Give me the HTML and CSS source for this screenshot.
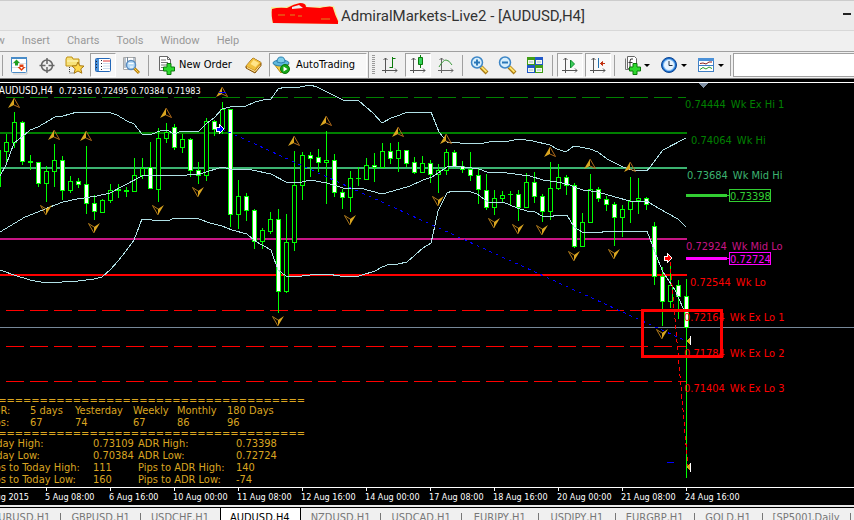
FILE: index.html
```html
<!DOCTYPE html>
<html lang="en">
<head>
<meta charset="utf-8">
<title>AdmiralMarkets-Live2 - [AUDUSD,H4]</title>
<link rel="stylesheet" href="styles.css">
</head>
<body>
<header class="titlebar">
  <svg class="scribble" width="72" height="26" viewBox="264 1 72 26" aria-hidden="true">
    <path d="M266 7h14l14-4 7 1 1 3 27-1 5 16-3 2-64-1z" fill="#f5ef9a"/>
    <path d="M267 9q6-2 15-1 7-4 13-5 6 0 6 4l14 1q13-3 13 0 2 7 5 13v3l-65-1q-2-8-1-14z" fill="#f00"/>
    <path d="M287 7l7-2 4 3-11 1z" fill="#ebebeb"/>
    <path d="M273 15h7m5 0h5m3 1h4m19 3h9" stroke="#d98a20"/>
  </svg>
  <h1 class="caption">AdmiralMarkets-Live2 - [AUDUSD,H4]</h1>
  <button class="minimize" aria-label="Minimize"></button>
</header>
<nav class="menu">
  <button>View</button><button>Insert</button><button>Charts</button><button>Tools</button><button>Window</button><button>Help</button>
</nav>
<div class="toolbar">
  <span class="sep sep-first"></span>
  <button class="tool" aria-label="Market Watch"><svg width="20" height="20" viewBox="0 0 20 20"><path d="M4 19h14V5" fill="none" stroke="#ccc"/><rect x="2.500" y="2.500" width="15" height="15" rx="1" fill="#fff" stroke="#4a8cc8"/><path d="M2 3h16" stroke="#4a8cc8" stroke-width="2"/><path d="M3 8.500h14M3 12.500h14" stroke="#ddd"/><path d="M7.500 4.500l3.500 3.500H9v2.500H6V8H4z" fill="#20a020"/><path d="M12.500 16L8.500 12h2V9.500h4V12h2z" fill="#e04010"/><path d="M12.500 14l-1.500-2h3z" fill="#fff"/></svg></button>
  <button class="tool" aria-label="Data Window"><svg width="20" height="20" viewBox="0 0 20 20"><circle cx="10" cy="10.500" r="5.500" fill="none" stroke="#666" stroke-width="1.500"/><path d="M10 3v6M10 12v6M2.500 10.500h6M11.500 10.500h6" stroke="#666" stroke-width="1.500"/></svg></button>
  <button class="tool" aria-label="Navigator"><svg width="22" height="20" viewBox="0 0 22 20"><path d="M2 4l1-2h5l1 2h6v7H2z" fill="#f7e27a" stroke="#c09010"/><path d="M3 6h11" stroke="#fff8c0"/><path d="M5.500 12v6h5" fill="none" stroke="#444" stroke-dasharray="1 1"/><path d="M14 7l1.700 3.700 4.300.4-3.200 2.800 1 4.300-3.800-2.200-3.800 2.200 1-4.300L8 11.100l4.300-.4z" fill="#ffd84a" stroke="#a87810"/></svg></button>
  <button class="tool pressed" aria-label="Terminal"><svg width="20" height="20" viewBox="0 0 20 20"><rect x="2.500" y="3.500" width="15" height="13" rx="1" fill="#fff" stroke="#2468b8"/><path d="M3 4h3v12H3z" fill="#4b91d8"/><path d="M8.500 5v10M3.500 6v8" stroke="#223" stroke-dasharray="1 2"/><path d="M10 6h7" stroke="#d33"/><path d="M10 8.500h7M10 11h7M10 13.500h7" stroke="#cde"/></svg></button>
  <button class="tool" aria-label="Strategy Tester"><svg width="20" height="20" viewBox="0 0 20 20"><path d="M2.500 2.500h12v12h-12z" fill="#fff" stroke="#aaa"/><path d="M4 3v10M6.500 2v8M13 2v8" stroke="#789"/><circle cx="10" cy="10" r="4.500" fill="#b8dcf8" stroke="#5a8cc0" stroke-width="1.500"/><path d="M7.500 8.500h5M9 12h3" stroke="#fff"/><path d="M13.500 13.500l4.500 4.500" stroke="#b88010" stroke-width="3"/><path d="M13.500 13.500l4 4" stroke="#ffd84a"/></svg></button>
  <span class="sep"></span>
  <button class="tool labelled new-order"><svg width="20" height="20" viewBox="0 0 20 20"><path d="M3.500 1.500h8l3 3v11h-11z" fill="#fff" stroke="#666"/><path d="M11.500 1.500v3h3" fill="none" stroke="#666"/><path d="M5 5h5M5 7.500h7M5 10h7M5 12.500h3" stroke="#777"/><path d="M11 8.500h4V12h3.500v4H15v3.500h-4V16H7.500v-4H11z" fill="#2dd82d" stroke="#087a08"/></svg>New Order</button>
  <button class="tool" aria-label="MetaEditor"><svg width="20" height="20" viewBox="0 0 20 20"><path d="M2 11l7-8 8 4.500v3L11 18l-9-5z" fill="#c88a18" stroke="#855308"/><path d="M9 3l8 4.500-6.500 7.500L2 11z" fill="#f0c040"/><path d="M9.500 5l5.500 3-3.500 4-5-3z" fill="#ffe58a"/><path d="M3 12.500l8 4 5-6" fill="none" stroke="#ffe9a8"/></svg></button>
  <button class="tool labelled auto pressed"><svg width="20" height="20" viewBox="0 0 20 20"><path d="M2 9l7 9 8-9z" fill="#f2cc45" stroke="#b58a10"/><ellipse cx="9" cy="8" rx="8" ry="3" fill="#60b8dc" stroke="#2a7fae"/><path d="M5 7q0-5 4-5t4 5q-4 2-8 0z" fill="#7ccdea" stroke="#2a7fae"/><circle cx="13" cy="14" r="4.500" fill="#16a716" stroke="#0a770a"/><path d="M11.500 11.500v5l4-2.500z" fill="#fff"/></svg>AutoTrading</button>
  <span class="sep sep-end"></span><span class="grip"></span>
  <button class="tool" aria-label="Bar Chart"><svg width="20" height="20" viewBox="0 0 20 20"><path d="M5.500 3v15M2 15.500h15M3.500 5l2-2 2 2M15 13.500l2 2-2 2" fill="none" stroke="#555"/><path d="M12.500 2v11M12.500 3.500h3M9.500 12.500h3" stroke="#0a7a0a"/></svg></button>
  <button class="tool pressed" aria-label="Candlesticks"><svg width="20" height="20" viewBox="0 0 20 20"><path d="M5.500 3v15M2 15.500h15M3.500 5l2-2 2 2M15 13.500l2 2-2 2" fill="none" stroke="#555"/><path d="M12.500 0v13" stroke="#0a7a0a"/><path d="M10.500 2.500h4v7h-4z" fill="#35d35a" stroke="#0a7a0a"/></svg></button>
  <button class="tool" aria-label="Line Chart"><svg width="20" height="20" viewBox="0 0 20 20"><path d="M5.500 3v15M2 15.500h15M3.500 5l2-2 2 2M15 13.500l2 2-2 2" fill="none" stroke="#666"/><path d="M3 12q4-7 7-7t6 5" fill="none" stroke="#3b9b3b"/></svg></button>
  <span class="sep sep-tight"></span>
  <button class="tool" aria-label="Zoom In"><svg width="20" height="20" viewBox="0 0 20 20"><path d="M12 12l6 6" stroke="#a87810" stroke-width="4"/><path d="M12.500 12l5 5" stroke="#ffe26a" stroke-width="2"/><circle cx="8" cy="7.500" r="5.500" fill="#d6eefc" stroke="#3d86c6" stroke-width="1.500"/><path d="M5 7.500h6M8 4.500v6" stroke="#2b78b8" stroke-width="2"/></svg></button>
  <button class="tool" aria-label="Zoom Out"><svg width="20" height="20" viewBox="0 0 20 20"><path d="M12 12l6 6" stroke="#a87810" stroke-width="4"/><path d="M12.500 12l5 5" stroke="#ffe26a" stroke-width="2"/><circle cx="8" cy="7.500" r="5.500" fill="#d6eefc" stroke="#3d86c6" stroke-width="1.500"/><path d="M5 7.500h6" stroke="#2b78b8" stroke-width="2"/></svg></button>
  <button class="tool" aria-label="Tile Windows"><svg width="20" height="20" viewBox="0 0 20 20"><path d="M2 2h8v8H2zM10 10h8v8h-8z" fill="#3f9d16"/><path d="M10 2h8v8h-8zM2 10h8v8H2z" fill="#2058c8"/><path d="M3 5h6v4H3zM11 5h6v4h-6zM3 13h6v4H3zM11 13h6v4h-6z" fill="#f4f8ec"/><path d="M4 7h4M12 7h4M4 15h4M12 15h4" stroke="#9bc"/></svg></button>
  <span class="sep"></span>
  <button class="tool pressed" aria-label="Auto Scroll"><svg width="20" height="20" viewBox="0 0 20 20"><path d="M5.500 3v15M2 15.500h15M3.500 5l2-2 2 2M15 13.500l2 2-2 2" fill="none" stroke="#555"/><path d="M10.500 5l4 4-4 4z" fill="#3bd05a" stroke="#0a8a2a"/></svg></button>
  <button class="tool pressed" aria-label="Chart Shift"><svg width="20" height="20" viewBox="0 0 20 20"><path d="M5.500 3v15M2 15.500h15M3.500 5l2-2 2 2M15 13.500l2 2-2 2" fill="none" stroke="#555"/><path d="M10.500 3v10" stroke="#2070b0"/><path d="M12 8.500h5M14.500 6.500l-2 2 2 2z" fill="#c03010" stroke="#c03010"/></svg></button>
  <span class="sep sep-tight"></span>
  <button class="tool drop" aria-label="Indicators"><svg width="20" height="20" viewBox="0 0 20 20"><path d="M5.500 1.500h7l2 2v10h-9z" fill="#fff" stroke="#666"/><path d="M3.500 3.500v11h6" fill="none" stroke="#777"/><path d="M11 4q-3-1-3 2v6M6.500 7.500h4" fill="none" stroke="#333"/><path d="M11 8.500h4V12h3.500v4H15v3.500h-4V16H7.500v-4H11z" fill="#2dd82d" stroke="#087a08"/></svg></button>
  <button class="tool drop" aria-label="Periods"><svg width="20" height="20" viewBox="0 0 20 20"><circle cx="10" cy="10" r="7.500" fill="#1d6fd0" stroke="#0d4590"/><circle cx="10" cy="10" r="5.500" fill="#e8f4ff" stroke="#8cc4f4"/><path d="M10 6v4.500h3.500" fill="none" stroke="#234"/></svg></button>
  <button class="tool drop" aria-label="Templates"><svg width="20" height="20" viewBox="0 0 20 20"><rect x="2.500" y="3.500" width="15" height="13" fill="#fff" stroke="#3f7fc4"/><path d="M2 4.500h16" stroke="#4b91d8" stroke-width="3"/><path d="M3 10.500h14" stroke="#3f7fc4"/><path d="M4 8.500l3-.5 3 1 3-2h3" fill="none" stroke="#8a2020"/><path d="M4 14.500l3-2 3 1.500 3-2 3 1.500" fill="none" stroke="#2a9a2a"/></svg></button>
  <span class="sep sep-tight"></span>
  <input class="search" type="text" aria-label="Symbol">
</div>
<main class="chart">
  <svg class="plot" viewBox="0 79 854 426" role="img" aria-label="AUDUSD four hour candlestick chart">
    <defs>
      <g id="up"><path d="M0 0L-6 10L0 7z" fill="#daa520"/><path d="M0 0L5.500 9.500L0 7" fill="none" stroke="#b06a1a"/></g>
      <g id="down"><path d="M0 0L6-10L0-6z" fill="#daa520"/><path d="M0 0L-5.500-9.500L0-6" fill="none" stroke="#b07a1a"/></g>
      <path id="exit" d="M5-5V5L0 0z" fill="#daa520"/>
    </defs>
    <path class="frame" d="M0 82.500H854M0 487.500H854"/>
    <path d="M699 83h9l-4.500 5z" fill="#8090a4"/>
    <g class="levels">
      <path class="ex green" d="M6 97.500H686"/>
      <path class="wide green" d="M0 133H687"/>
      <path class="wide sea" d="M0 168H687"/>
      <path class="wide violet" d="M0 239H687"/>
      <path class="wide red" d="M0 275H687"/>
      <path class="ex red" d="M6 310.500H686M6 346.500H686M6 381.500H686"/>
      <path d="M0 327.500H854" stroke="#778899"/>
      <path d="M686 195.500H727" stroke="#32cd32" stroke-width="3"/><path d="M727 195.500h3" stroke="#32cd32"/>
      <path d="M686 258.500H727" stroke="#f0f" stroke-width="3"/><path d="M727 258.500h3" stroke="#f0f"/>
      <path d="M667 462.500h7" stroke="#00f"/>
    </g>
    <path class="wicks" d="M-1.500 150V187M6.500 134V163M14.500 112V148M22.500 121V165M30.500 155V170M38.500 162V187M46.500 166V202M54.500 144V187M62.500 156V200M70.500 176V193M78.500 178V188M86.500 146V214M94.500 195V220M102.500 199V213M110.500 184V203M118.500 184V198M126.500 187V197M134.500 158V192M142.500 158V179M150.500 142V189M158.500 128V202M166.500 123V143M174.500 124V150M182.500 134V153M190.500 138V177M198.500 162V184M206.500 118V181M214.500 120V136M222.500 102V134M230.500 109V227M238.500 180V229M246.500 193V221M254.500 209V249M262.500 228V249M270.500 212V234M278.500 209V313M286.500 214V293M294.500 151V251M302.500 152V200M310.500 152V177M318.500 149V172M326.500 131V204M334.500 154V197M342.500 189V209M350.500 171V212M358.500 167V186M366.500 158V180M374.500 153V182M382.500 143V168M390.500 143V164M398.500 142V172M406.500 150V167M414.500 157V174M422.500 156V173M430.500 160V183M438.500 164V193M446.500 149V175M454.500 150V168M462.500 161V173M470.500 152V181M478.500 169V204M486.500 174V210M494.500 190V215M502.500 191V203M510.500 191V205M518.500 190V221M526.500 173V208M534.500 172V203M542.500 194V222M550.500 162V220M558.500 164V190M566.500 175V195M574.500 183V248M582.500 213V247M590.500 174V223M598.500 187V202M606.500 196V211M614.500 202V246M622.500 205V237M630.500 177V223M638.500 178V214M646.500 197V210M654.500 222V285M662.500 267V326M670.500 264V308M678.500 280V319M686.500 279V478"/>
    <path class="wicks" d="M356 178.500h5M508 194.500h5"/>
    <path class="rising" d="M-3.500 150.500h4v36h-4zM4.500 142.500h4v9h-4zM12.500 122.500h4v20h-4zM28.500 161.500h4v1h-4zM44.500 171.500h4v12h-4zM52.500 160.500h4v11h-4zM68.500 181.500h4v9h-4zM100.500 200.500h4v12h-4zM108.500 190.500h4v10h-4zM116.500 189.500h4v1h-4zM124.500 190.500h4v1h-4zM132.500 175.500h4v16h-4zM140.500 168.500h4v7h-4zM156.500 138.500h4v51h-4zM164.500 132.500h4v6h-4zM180.500 139.500h4v8h-4zM204.500 121.500h4v54h-4zM220.500 109.500h4v19h-4zM236.500 196.500h4v18h-4zM260.500 230.500h4v11h-4zM268.500 219.500h4v12h-4zM284.500 242.500h4v49h-4zM292.500 185.500h4v57h-4zM300.500 155.500h4v30h-4zM324.500 160.500h4v2h-4zM348.500 178.500h4v19h-4zM364.500 165.500h4v14h-4zM380.500 151.500h4v16h-4zM396.500 150.500h4v8h-4zM420.500 163.500h4v9h-4zM436.500 170.500h4v4h-4zM444.500 152.500h4v18h-4zM492.500 198.500h4v9h-4zM500.500 195.500h4v3h-4zM524.500 182.500h4v25h-4zM548.500 188.500h4v23h-4zM556.500 177.500h4v11h-4zM580.500 222.500h4v24h-4zM588.500 189.500h4v33h-4zM620.500 209.500h4v8h-4zM628.500 201.500h4v8h-4zM636.500 198.500h4v2h-4zM668.500 285.500h4v16h-4z"/>
    <path class="falling" d="M20.500 122.500h4v39h-4zM36.500 162.500h4v21h-4zM60.500 160.500h4v30h-4zM76.500 181.500h4v3h-4zM84.500 184.500h4v19h-4zM92.500 203.500h4v8h-4zM148.500 167.500h4v21h-4zM172.500 127.500h4v20h-4zM188.500 139.500h4v31h-4zM196.500 170.500h4v5h-4zM212.500 121.500h4v8h-4zM228.500 109.500h4v105h-4zM244.500 196.500h4v14h-4zM252.500 210.500h4v31h-4zM276.500 219.500h4v72h-4zM308.500 155.500h4v3h-4zM316.500 157.500h4v5h-4zM332.500 160.500h4v32h-4zM340.500 192.500h4v5h-4zM372.500 165.500h4v2h-4zM388.500 151.500h4v7h-4zM404.500 150.500h4v13h-4zM412.500 162.500h4v10h-4zM428.500 163.500h4v11h-4zM452.500 152.500h4v14h-4zM460.500 166.500h4v3h-4zM468.500 169.500h4v6h-4zM476.500 175.500h4v14h-4zM484.500 190.500h4v17h-4zM516.500 194.500h4v13h-4zM532.500 182.500h4v14h-4zM540.500 196.500h4v15h-4zM564.500 177.500h4v8h-4zM572.500 185.500h4v61h-4zM596.500 189.500h4v9h-4zM604.500 199.500h4v5h-4zM612.500 204.500h4v13h-4zM644.500 198.500h4v6h-4zM652.500 226.500h4v50h-4zM660.500 276.500h4v25h-4zM676.500 285.500h4v11h-4zM684.500 296.500h4v31h-4z"/>
    <g class="bands">
      <polyline points="0,176 6,165 14,143 22,137 30,130 38,127 55,117 63,116 77,112 108,112 117,115 127,121 134,124 142,134 152,134 160,131 167,130 174,134 182,131 190,132 199,131 207,123 214,118 222,109 230,107 246,106 255,102 263,100 271,99 278,89 285,87 295,88 310,85 317,87 333,95 343,100 359,101 373,113 382,123 391,118 400,115 407,112 417,113 420,112 431,112 435,122 439,132 447,142 460,143 479,144 494,141 504,142 519,139 533,141 550,145 557,149 566,152 574,146 580,147 590,149 598,152 607,159 615,163 623,167 632,170 647,171 663,150 686,138"/>
      <polyline points="0,232 25,217 33,214 50,207 63,202 77,199 97,196 110,193 125,185 142,176 157,175 175,176 200,174 222,167 230,169 252,170 271,174 286,182 302,182 310,180 327,183 343,188 360,188 382,194 400,189 410,186 423,180 432,177 447,167 457,166 479,169 487,172 507,173 530,176 543,180 557,182 567,184 580,189 583,190 598,192 615,197 630,201 647,201 653,205 667,213 678,219 686,227"/>
      <polyline points="0,270 14,275 30,280 46,283 62,282 78,281 94,279 102,277 110,270 118,261 126,251 134,240 142,219 152,220 167,221 175,218 199,219 210,223 222,226 232,230 247,234 255,241 271,250 278,270 286,276 295,277 310,275 327,274 340,276 359,276 375,271 382,267 390,264 398,264 407,262 423,248 431,243 435,225 438,211 447,193 452,191 468,191 477,194 488,202 495,203 503,202 517,208 527,211 535,212 542,216 550,217 557,215 567,215 574,227 582,232 598,233 607,231 620,232 627,231 647,231 658,260 663,272 675,290 683,308 686,314"/>
    </g>
    <g class="fractals">
      <use href="#up" x="14" y="98"/><use href="#up" x="54" y="130"/><use href="#up" x="86" y="131"/><use href="#up" x="166" y="108"/><use href="#up" x="222" y="87"/><use href="#up" x="294" y="136"/><use href="#up" x="326" y="116"/><use href="#up" x="398" y="127"/><use href="#up" x="446" y="134"/><use href="#up" x="550" y="147"/><use href="#up" x="590" y="159"/><use href="#up" x="630" y="162"/>
      <use href="#down" x="46" y="215"/><use href="#down" x="94" y="233"/><use href="#down" x="158" y="215"/><use href="#down" x="198" y="197"/><use href="#down" x="278" y="326"/><use href="#down" x="350" y="225"/><use href="#down" x="438" y="206"/><use href="#down" x="494" y="228"/><use href="#down" x="518" y="234"/><use href="#down" x="542" y="235"/><use href="#down" x="574" y="261"/><use href="#down" x="614" y="259"/><use href="#down" x="662" y="339"/>
    </g>
    <path d="M219 92.500h7" stroke="#00f"/>
    <path d="M222 129L686 341" stroke="#00f" stroke-dasharray="3 4"/>
    <path d="M670 262L688 467" stroke="#f00" stroke-dasharray="4 3"/>
    <path d="M216 127h3v-3l5 5-5 5v-3h-3z" fill="#00f" stroke="#fff"/>
    <path d="M664 256h3v-3l5 5-5 5v-3h-3z" fill="#f00" stroke="#fff"/>
    <use href="#exit" x="686" y="341"/><use href="#exit" x="686" y="467"/>
    <path d="M690.500 336v9M690.500 463v9" stroke="#fff"/>
    <g class="prices">
      <text class="t-green" x="685" y="108">0.74444&#8194;Wk Ex Hi 1</text>
      <text class="t-green" x="691" y="144">0.74064&#8194;Wk Hi</text>
      <text class="t-sea" x="687" y="179">0.73684&#8194;Wk Mid Hi</text>
      <text class="t-violet" x="686" y="250">0.72924&#8194;Wk Mid Lo</text>
      <text class="t-red" x="690" y="286">0.72544&#8194;Wk Lo</text>
      <text class="t-red" x="684" y="321">0.72164&#8194;Wk Ex Lo 1</text>
      <text class="t-red" x="684" y="357">0.71784&#8194;Wk Ex Lo 2</text>
      <text class="t-red" x="684" y="392">0.71404&#8194;Wk Ex Lo 3</text>
      <text class="t-lime" x="730" y="200">0.73398</text>
      <text class="t-pink" x="730" y="263">0.72724</text>
    </g>
    <rect class="tag" x="729.500" y="189.500" width="41" height="12" stroke="#32cd32"/>
    <rect class="tag" x="729.500" y="252.500" width="41" height="12" stroke="#f0f"/>
    <rect class="tag" x="642.500" y="310.500" width="79" height="46" stroke="#f00" stroke-width="3"/>
    <g class="small">
      <text class="symbol" x="53" y="94" text-anchor="end">AUDUSD,H4</text>
      <text x="59" y="94">0.72316 0.72495 0.70384 0.71983</text>
      <text x="29" y="500" text-anchor="end">4 Aug 2015</text>
      <text x="45" y="500">5 Aug 08:00</text><text x="109" y="500">6 Aug 16:00</text><text x="173" y="500">10 Aug 00:00</text><text x="237" y="500">11 Aug 08:00</text><text x="301" y="500">12 Aug 16:00</text><text x="365" y="500">14 Aug 00:00</text><text x="429" y="500">17 Aug 08:00</text><text x="493" y="500">18 Aug 16:00</text><text x="557" y="500">20 Aug 00:00</text><text x="621" y="500">21 Aug 08:00</text><text x="685" y="500">24 Aug 16:00</text>
    </g>
    <path class="frame" d="M46.500 488v3M110.500 488v3M174.500 488v3M238.500 488v3M302.500 488v3M366.500 488v3M430.500 488v3M494.500 488v3M558.500 488v3M622.500 488v3M686.500 488v3"/>
  </svg>
  <section class="adr">
    <div class="rule">======================================</div>
    <table class="ranges">
      <tr><th>ADR:</th><td>5 days</td><td>Yesterday</td><td>Weekly</td><td>Monthly</td><td>180 Days</td></tr>
      <tr><th>Pips:</th><td>67</td><td>74</td><td>67</td><td>86</td><td>96</td></tr>
    </table>
    <div class="rule">======================================</div>
    <table class="levels-table">
      <tr><th>Today High:</th><td>0.73109</td><th>ADR High:</th><td>0.73398</td></tr>
      <tr><th>Today Low:</th><td>0.70384</td><th>ADR Low:</th><td>0.72724</td></tr>
      <tr><th>Pips to Today High:</th><td>111</td><th>Pips to ADR High:</th><td>140</td></tr>
      <tr><th>Pips to Today Low:</th><td>160</td><th>Pips to ADR Low:</th><td>-74</td></tr>
    </table>
  </section>
</main>
<nav class="tabs">
  <button class="pair">EURUSD,H1</button><button class="pair">GBPUSD,H1</button><button class="pair before">USDCHF,H1</button><button class="pair active">AUDUSD,H4</button><button class="pair">NZDUSD,H1</button><button class="pair">USDCAD,H1</button><button class="pair">EURJPY,H1</button><button class="pair">USDJPY,H1</button><button class="pair">EURGBP,H1</button><button>GOLD,H1</button><button>[SP500],Daily</button>
</nav>
</body>
</html>
```
FILE: styles.css
```css
* { box-sizing: border-box; }
body {
  margin: 0;
  height: 100vh;
  overflow: hidden;
  background: #f0f0f0;
  font: 11px/12px "DejaVu Sans Condensed", "DejaVu Sans", sans-serif;
  color: #000;
}
button {
  border: 0;
  padding: 0;
  background: none;
  font: inherit;
  color: inherit;
  white-space: nowrap;
}
.titlebar {
  display: flex;
  align-items: center;
  justify-content: center;
  position: relative;
  height: 31px;
  background: #ebebeb;
  border-top: 1px solid #ccc;
  border-bottom: 1px solid #d8d8d8;
}
.scribble { flex: none; margin-bottom: 4px; }
.caption {
  margin: 0;
  font: 15px/20px Roboto, sans-serif;
  color: #333;
  white-space: nowrap;
}
.minimize {
  position: absolute;
  right: 3px;
  top: 12px;
  width: 8px;
  height: 2px;
  background: #222;
}
.menu {
  display: flex;
  gap: 17px;
  height: 20px;
  margin-left: -19px;
  font: 11px/20px Roboto, sans-serif;
  color: #999;
}
.toolbar {
  display: flex;
  align-items: stretch;
  height: 28px;
  border-top: 1px solid #a0a0a0;
  border-bottom: 1px solid #808080;
  background: #f0f0f0;
}
.sep {
  flex: none;
  width: 1px;
  margin: 3px 3px 2px;
  background: #a0a0a0;
}
.sep-first { margin-left: 2px; margin-right: 2px; }
.sep-tight { margin-left: 2px; margin-right: 2px; }
.sep-end { margin: 0 1px 0 0; }
.grip {
  flex: none;
  width: 3px;
  margin: 3px 1px 3px 2px;
  background: repeating-linear-gradient(#999 0 1px, #f0f0f0 1px 2px);
}
.tool {
  display: flex;
  align-items: center;
  justify-content: center;
  flex: none;
  width: 26px;
  height: 24px;
  margin: 1px;
  border: 1px solid transparent;
}
.pressed {
  background: #f8f8f8;
  border-color: #a0a0a0 #fff #fff #a0a0a0;
}
.labelled {
  justify-content: flex-start;
  gap: 3px;
  padding-left: 2px;
}
.new-order { width: 86px; }
.auto { width: 98px; gap: 4px; }
.drop { width: 35px; gap: 2px; }
.drop::after {
  content: "";
  border: 3px solid transparent;
  border-top-color: #000;
  border-bottom: 0;
}
.search {
  flex: 1;
  min-width: 0;
  margin: 1px 0;
  border: 1px solid #a0a0a0;
  border-right: 0;
  background: #fff;
}
.chart {
  position: relative;
  overflow: hidden;
  background: #000;
}
.plot {
  display: block;
  width: 100%;
  height: auto;
  shape-rendering: crispEdges;
}
.frame { stroke: #fff; }
.ex { stroke-dasharray: 18 6; }
.wide { stroke-width: 2; }
.green { stroke: #008000; }
.sea { stroke: #3cb371; }
.violet { stroke: #c71585; }
.red { stroke: #f00; }
.wicks { stroke: #0f0; }
.rising { fill: #000; stroke: #0f0; }
.falling { fill: #fff; stroke: #0f0; }
.bands { fill: none; stroke: #b0e0e6; }
.fractals { shape-rendering: auto; }
.tag { fill: none; }
.prices { font-size: 11px; white-space: pre; }
.t-green { fill: #008000; }
.t-sea { fill: #3cb371; }
.t-violet { fill: #c71585; }
.t-red { fill: #f00; }
.t-lime { fill: #32cd32; }
.t-pink { fill: #f0f; }
.small { font-size: 9px; fill: #fff; }
.symbol { font-size: 10px; }
.adr {
  position: absolute;
  left: -14px;
  bottom: 19px;
  width: 319px;
  color: #daa520;
}
.rule {
  display: flex;
  justify-content: flex-end;
  height: 9px;
  line-height: 9px;
}
.adr table {
  border-collapse: collapse;
  table-layout: fixed;
  width: 100%;
}
.adr th, .adr td {
  padding: 0;
  font-weight: normal;
  text-align: left;
  white-space: nowrap;
}
.ranges th { width: 44px; }
.ranges td:nth-child(2) { width: 45px; }
.ranges td:nth-child(3) { width: 58px; }
.ranges td:nth-child(4) { width: 44px; }
.ranges td:nth-child(5) { width: 50px; }
.levels-table th:first-child { width: 107px; }
.levels-table td:nth-child(2) { width: 45px; }
.levels-table th:nth-child(3) { width: 98px; }
.tabs {
  display: flex;
  height: 24px;
  margin-top: 2px;
  margin-left: -18px;
  border-top: 1px solid #000;
  box-shadow: 0 -2px 0 #e8e8e8;
  color: #777;
}
.tabs button {
  position: relative;
  flex: none;
  min-width: 68px;
  height: 20px;
  padding: 0 11px 0 10px;
}
.tabs .pair { min-width: 77px; }
.tabs button::after {
  content: "";
  position: absolute;
  right: 0;
  top: 5px;
  width: 1px;
  height: 11px;
  background: #777;
}
.tabs .before::after { display: none; }
.tabs .active {
  background: #fff;
  color: #000;
  box-shadow: inset 1px 0 0 #000, inset -1px 0 0 #000;
}
.tabs .active::after { display: none; }
```
